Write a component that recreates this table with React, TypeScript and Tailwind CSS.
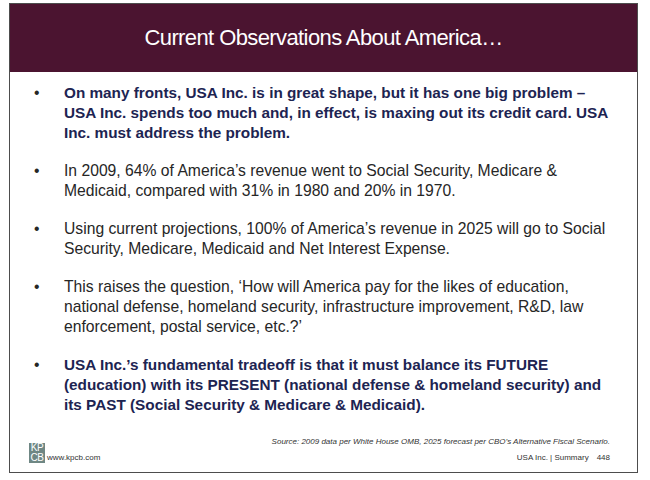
export default function App() {
  const bold = "font-bold text-[#1d2452] text-[15.3px]";
  return (
    <div className="w-[650px] h-[480px] bg-white pt-[3px] pl-[9px] font-['Liberation_Sans',Arial,sans-serif]">
      <div className="w-[629px] h-[470px] border border-[#4d4d4d] flex flex-col">
        {/* title bar */}
        <div className="h-[68px] bg-[#4b1430] flex items-center justify-center">
          <h1 className="text-white text-[22px] tracking-[-0.6px] pb-[2px]">
            Current Observations About America…
          </h1>
        </div>

        {/* bullets */}
        <ul className="pt-[11px] flex flex-col gap-[18px] text-[15.7px] leading-[20px] text-[#262626]">
          <li className="flex">
            <span className="w-[54px] pl-[24px]">•</span>
            <p className={bold}>
              On many fronts, USA Inc. is in great shape, but it has one big problem –<br />
              USA Inc. spends too much and, in effect, is maxing out its credit card. USA<br />
              Inc. must address the problem.
            </p>
          </li>
          <li className="flex">
            <span className="w-[54px] pl-[24px]">•</span>
            <p>
              In 2009, 64% of America’s revenue went to Social Security, Medicare &amp;<br />
              Medicaid, compared with 31% in 1980 and 20% in 1970.
            </p>
          </li>
          <li className="flex">
            <span className="w-[54px] pl-[24px]">•</span>
            <p>
              Using current projections, 100% of America’s revenue in 2025 will go to Social<br />
              Security, Medicare, Medicaid and Net Interest Expense.
            </p>
          </li>
          <li className="flex">
            <span className="w-[54px] pl-[24px]">•</span>
            <p>
              This raises the question, ‘How will America pay for the likes of education,<br />
              national defense, homeland security, infrastructure improvement, R&amp;D, law<br />
              enforcement, postal service, etc.?’
            </p>
          </li>
          <li className="flex">
            <span className="w-[54px] pl-[24px]">•</span>
            <p className={bold}>
              USA Inc.’s fundamental tradeoff is that it must balance its FUTURE<br />
              (education) with its PRESENT (national defense &amp; homeland security) and<br />
              its PAST (Social Security &amp; Medicare &amp; Medicaid).
            </p>
          </li>
        </ul>

        {/* footer */}
        <div className="mt-auto pb-[9px] pl-[19px] pr-[27px] flex items-end justify-between">
          <div className="flex items-end gap-[2px]">
            <div className="w-[16px] h-[20px] bg-[#6f8784] text-white text-[10px] leading-[10px] flex flex-col items-center justify-center tracking-[-0.5px]">
              <span>KP</span>
              <span>CB</span>
            </div>
            <span className="text-[8px] leading-[10px] text-[#333]">www.kpcb.com</span>
          </div>
          <div className="flex flex-col items-end gap-[6px] text-[8px] leading-[10px] text-[#333]">
            <span className="italic">
              Source: 2009 data per White House OMB, 2025 forecast per CBO’s Alternative Fiscal Scenario.
            </span>
            <span>
              USA Inc. | Summary<span className="ml-[8px]">448</span>
            </span>
          </div>
        </div>
      </div>
    </div>
  );
}
